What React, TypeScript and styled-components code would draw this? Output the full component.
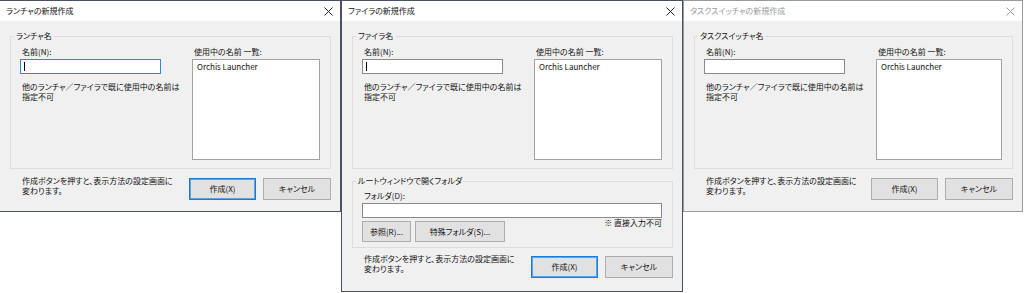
import React from "react";
import styled, { createGlobalStyle } from "styled-components";

const GlobalStyle = createGlobalStyle`
  html, body {
    margin: 0;
    padding: 0;
    background: #ffffff;
  }
  body {
    font-family: "Noto Sans CJK JP", "Noto Sans", sans-serif;
    font-size: 8px;
    line-height: 10px;
    font-feature-settings: "palt";
    color: #111111;
  }
`;

const Desktop = styled.div`
  display: flex;
  align-items: flex-start;
  width: 1025px;
  height: 293px;
  margin-left: -1px;
  overflow: hidden;
`;

const Window = styled.section<{ $w: number; $active?: boolean }>`
  width: ${(p) => p.$w}px;
  box-sizing: border-box;
  border: 1px solid ${(p) => (p.$active ? "#4a5163" : "#9a9a9a")};
  background: #f0f0f0;
  display: flex;
  flex-direction: column;
  flex-shrink: 0;
`;

const TitleBar = styled.header<{ $active?: boolean }>`
  height: 20px;
  background: #ffffff;
  display: flex;
  align-items: center;
  justify-content: space-between;
  padding: 0 7px 0 6px;
  color: ${(p) => (p.$active ? "#111111" : "#999999")};
`;

const CloseIcon = ({ color }: { color: string }) => (
  <svg width="9" height="9" viewBox="0 0 9 9">
    <line x1="0.5" y1="0.5" x2="8.5" y2="8.5" stroke={color} strokeWidth="1" />
    <line x1="8.5" y1="0.5" x2="0.5" y2="8.5" stroke={color} strokeWidth="1" />
  </svg>
);

const Body = styled.div<{ $bottom: number }>`
  padding: 10px 9px ${(p) => p.$bottom}px 10px;
  display: flex;
  flex-direction: column;
`;

const Group = styled.fieldset<{ $gapTop?: number }>`
  margin: ${(p) => p.$gapTop ?? 0}px 0 0 0;
  border: 1px solid #dcdcdc;
  padding: 6px 10px 8px 9px;
  min-width: 0;
`;

const FolderBox = styled(Group)`
  padding-top: 5px;
  padding-bottom: 5px;
`;

const Legend = styled.legend`
  padding: 0 2px;
  margin-left: -6px;
  line-height: 10px;
`;

const NameGrid = styled.div`
  display: grid;
  grid-template-columns: 141px 1fr;
  column-gap: 31px;
  align-items: start;
`;

const Column = styled.div`
  display: flex;
  flex-direction: column;
`;

const Label = styled.div`
  padding-left: 2px;
  height: 10px;
  margin-bottom: 2px;
  white-space: nowrap;
`;

const TextBox = styled.div<{ $focused?: boolean }>`
  height: 15px;
  box-sizing: border-box;
  background: #ffffff;
  border: 1px solid ${(p) => (p.$focused ? "#2f86da" : "#8a8a8a")};
  display: flex;
  align-items: center;
  padding-left: 3px;
`;

const Caret = styled.span`
  width: 1px;
  height: 9px;
  background: #000000;
`;

const Note = styled.p`
  margin: 8px 0 0 2px;
  white-space: nowrap;
`;

const ListBox = styled.div`
  height: 101px;
  box-sizing: border-box;
  background: #ffffff;
  border: 1px solid #a3a3a3;
  padding: 2px 4px;
`;

const Footer = styled.div<{ $top: number }>`
  display: flex;
  align-items: flex-start;
  justify-content: space-between;
  padding-top: ${(p) => p.$top}px;
`;

const FooterText = styled.p`
  margin: 0 0 0 12px;
  white-space: nowrap;
`;

const ButtonRow = styled.div`
  display: flex;
  align-items: flex-start;
  gap: 7px;
`;

const Button = styled.button<{ $w: number; $h?: number; $default?: boolean }>`
  width: ${(p) => p.$w}px;
  height: ${(p) => p.$h ?? 22}px;
  margin-top: 2px;
  box-sizing: border-box;
  background: #e1e1e1;
  border: 1px solid ${(p) => (p.$default ? "#1a7ad6" : "#adadad")};
  box-shadow: ${(p) => (p.$default ? "inset 0 0 0 1px #5aa3e8" : "none")};
  font: inherit;
  color: #111111;
  padding: 0;
  white-space: nowrap;
`;

const FolderRow = styled.div`
  display: flex;
  align-items: flex-start;
  justify-content: space-between;
`;

const SmallButtons = styled.div`
  display: flex;
  gap: 4px;
  margin-top: 1px;
`;

const FolderNote = styled.span`
  white-space: nowrap;
`;

type DialogProps = {
  w: number;
  title: string;
  groupTitle: string;
  active?: boolean;
  focused?: boolean;
  caret?: boolean;
  folder?: boolean;
};

const NameGroup = ({ groupTitle, focused, caret }: { groupTitle: string; focused?: boolean; caret?: boolean }) => (
  <Group>
    <Legend>{groupTitle}</Legend>
    <NameGrid>
      <Column>
        <Label>名前(N):</Label>
        <TextBox $focused={focused}>{caret && <Caret />}</TextBox>
        <Note>
          他のランチャ／ファイラで既に使用中の名前は
          <br />
          指定不可
        </Note>
      </Column>
      <Column>
        <Label>使用中の名前 一覧:</Label>
        <ListBox>Orchis Launcher</ListBox>
      </Column>
    </NameGrid>
  </Group>
);

const FolderGroup = () => (
  <FolderBox $gapTop={7}>
    <Legend>ルートウィンドウで開くフォルダ</Legend>
    <Label>フォルダ(D):</Label>
    <TextBox />
    <FolderRow>
      <SmallButtons>
        <Button $w={49} $h={21}>参照(R)...</Button>
        <Button $w={90} $h={21}>特殊フォルダ(S)...</Button>
      </SmallButtons>
      <FolderNote>※ 直接入力不可</FolderNote>
    </FolderRow>
  </FolderBox>
);

const Dialog = ({ w, title, groupTitle, active, focused, caret, folder }: DialogProps) => (
  <Window $w={w} $active={active}>
    <TitleBar $active={active}>
      <span>{title}</span>
      <CloseIcon color={active ? "#222222" : "#a0a0a0"} />
    </TitleBar>
    <Body $bottom={folder ? 13 : 11}>
      <NameGroup groupTitle={groupTitle} focused={focused} caret={caret} />
      {folder && <FolderGroup />}
      <Footer $top={folder ? 6 : 7}>
        <FooterText>
          作成ボタンを押すと、表示方法の設定画面に
          <br />
          変わります。
        </FooterText>
        <ButtonRow>
          <Button $w={67} $default={active}>作成(X)</Button>
          <Button $w={68}>キャンセル</Button>
        </ButtonRow>
      </Footer>
    </Body>
  </Window>
);

const App = () => {
  return (
    <>
      <GlobalStyle />
      <Desktop>
        <Dialog w={342} title="ランチャの新規作成" groupTitle="ランチャ名" active focused caret />
        <Dialog w={342} title="ファイラの新規作成" groupTitle="ファイラ名" active caret folder />
        <Dialog w={340} title="タスクスイッチャの新規作成" groupTitle="タスクスイッチャ名" />
      </Desktop>
    </>
  );
};

export default App;
